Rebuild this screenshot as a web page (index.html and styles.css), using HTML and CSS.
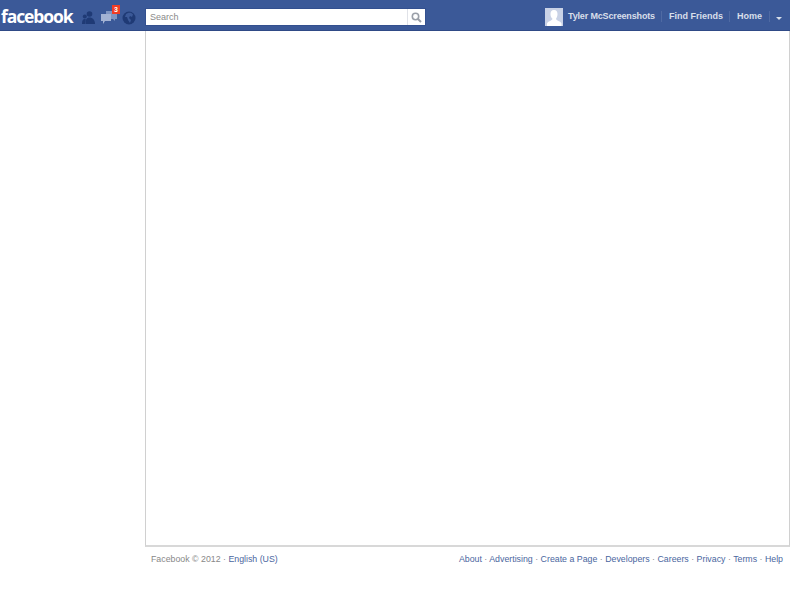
FILE: index.html
```html
<!DOCTYPE html>
<html lang="en">
<head>
    <meta charset="UTF-8">
    <title>Facebook</title>
    <link rel="stylesheet" href="styles.css">
</head>
<body>
    <div class="page">
        <!-- Top bar -->
        <header class="topbar">
            <div class="left-col">
                <a href="#" class="logo">facebook</a>
                <div class="jewels">
                    <svg class="jewel jewel-friends" width="13" height="13" viewBox="0 0 13 13">
                        <circle cx="7.500" cy="3" r="2.800" fill="#1f3a75"/>
                        <path d="M3.500 13c0-4 .8-6.500 4-6.500S13 9 13 13z" fill="#1f3a75"/>
                        <circle cx="2.800" cy="5.500" r="2" fill="#1f3a75"/>
                        <path d="M0 13c0-3.500.8-5 2.800-5 .8 0 1 .4 1 .8L3 13z" fill="#1f3a75"/>
                    </svg>
                    <div class="jewel-msg">
                        <svg class="jewel" width="16" height="15" viewBox="0 0 16 15">
                            <path d="M5 1h11v8h-2v2l-2-2H5z" fill="#7f95c2"/>
                            <path d="M0 4h10v7H4l-2 3v-3H0z" fill="#a3b3d4"/>
                        </svg>
                        <span class="badge">3</span>
                    </div>
                    <svg class="jewel" width="14" height="14" viewBox="0 0 14 14">
                        <circle cx="7" cy="7" r="6.500" fill="#1f3a75"/>
                        <path d="M6 2c2-.5 4 0 5 1.500L10 6 8 5 7 7l2 2-1 3-2-3-1-3H3l1-3z" fill="#3b5998"/>
                    </svg>
                </div>
            </div>
            <form class="search">
                <input type="text" class="search-input" placeholder="Search">
                <button type="button" class="search-btn">
                    <svg width="11" height="11" viewBox="0 0 11 11">
                        <circle cx="4.500" cy="4.500" r="3.200" fill="none" stroke="#9a9fa8" stroke-width="1.600"/>
                        <path d="M7 7l3 3" stroke="#9a9fa8" stroke-width="2"/>
                    </svg>
                </button>
            </form>
            <nav class="user-nav">
                <span class="avatar">
                    <svg width="18" height="18" viewBox="0 0 18 18">
                        <rect width="18" height="18" fill="#c9d2e6"/>
                        <path d="M9 2c2.500 0 3.700 2 3.500 4.500-.2 2-.8 3.500-1.500 4.300 0 1 1.500 1.700 3 2.500 1.500.7 2.500 1.500 2.500 2.700v2H2v-2c0-1.200 1-2 2.500-2.700 1.500-.8 3-1.500 3-2.500C6.300 10 5.700 8.500 5.500 6.500 5.300 4 6.500 2 9 2z" fill="#fff"/>
                    </svg>
                </span>
                <a href="#" class="nav-link nav-name">Tyler McScreenshots</a>
                <a href="#" class="nav-link">Find Friends</a>
                <a href="#" class="nav-link">Home</a>
                <span class="nav-arrow"></span>
            </nav>
        </header>

        <!-- Content -->
        <main class="content-row">
            <div class="content-box"></div>
        </main>

        <!-- Footer -->
        <footer class="footer">
            <div class="footer-left">
                <span>Facebook © 2012 · </span><a href="#">English (US)</a>
            </div>
            <div class="footer-right">
                <a href="#">About</a> · <a href="#">Advertising</a> · <a href="#">Create a Page</a> · <a href="#">Developers</a> · <a href="#">Careers</a> · <a href="#">Privacy</a> · <a href="#">Terms</a> · <a href="#">Help</a>
            </div>
        </footer>
    </div>
</body>
</html>
```
FILE: styles.css
```css
* {
  margin: 0;
  padding: 0;
  box-sizing: border-box;
}

html,
body {
  height: 100%;
  background: #fff;
}

body {
  font-family: "Liberation Sans", Arial, sans-serif;
  font-size: 9px;
  overflow: hidden;
}

a {
  text-decoration: none;
}

.page {
  width: 790px;
}

/* Top bar */
.topbar {
  height: 31px;
  background: #3b5998;
  border-bottom: 1px solid #2f4a86;
  display: flex;
  align-items: flex-start;
}

.left-col {
  width: 145px;
  display: flex;
  flex-shrink: 0;
}

.logo {
  font-family: "Open Sans", "Liberation Sans", sans-serif;
  font-weight: 700;
  font-size: 17.500px;
  letter-spacing: -1.1px;
  line-height: 33px;
  color: #fff;
  padding-left: 1px;
  width: 82px;
}

.jewels {
  display: flex;
  align-items: center;
  height: 31px;
  gap: 5px;
  padding-top: 4px;
}

.jewel {
  display: block;
}

.jewel-friends {
  margin-right: 1px;
}

.jewel-msg {
  position: relative;
}

.badge {
  position: absolute;
  top: -5px;
  right: -3px;
  width: 8px;
  height: 9px;
  background: #f03d25;
  color: #fff;
  font-size: 7px;
  font-weight: 700;
  line-height: 9px;
  text-align: center;
}

/* Search */
.search {
  width: 281px;
  height: 18px;
  margin-top: 8px;
  background: #fff;
  border: 1px solid #33508f;
  display: flex;
}

.search-input {
  flex: 1;
  min-width: 0;
  border: none;
  outline: none;
  padding-left: 4px;
  font-family: inherit;
  font-size: 9px;
  background: transparent;
}

.search-input::placeholder {
  color: #8a8a8a;
}

.search-btn {
  width: 18px;
  border: none;
  border-left: 1px solid #e0e2e8;
  background: #fff;
  display: flex;
  align-items: center;
  justify-content: center;
}

/* Right navigation */
.user-nav {
  margin-left: auto;
  height: 30px;
  display: flex;
  align-items: center;
  padding-top: 3px;
}

.avatar {
  width: 18px;
  height: 18px;
  margin-right: 5px;
}

.avatar svg {
  display: block;
}

.nav-link {
  color: #d8dfea;
  font-weight: 700;
  font-size: 9px;
  line-height: 11px;
  padding: 0 6.500px;
  border-right: 1px solid #4f6aa3;
}

.nav-name {
  padding-left: 0;
  letter-spacing: -0.15px;
}

.nav-arrow {
  width: 0;
  height: 0;
  margin: 3px 8px 0 6.500px;
  border-left: 3.500px solid transparent;
  border-right: 3.500px solid transparent;
  border-top: 3px solid #d8dfea;
}

/* Content */
.content-row {
  padding-left: 145px;
}

.content-box {
  height: 516px;
  background: #fff;
  border: 1px solid #d0d0d0;
  border-top: none;
  border-bottom-width: 2px;
  border-bottom-color: #d8d8d8;
}

/* Footer */
.footer {
  display: flex;
  justify-content: space-between;
  padding: 6px 7px 0 151px;
  font-size: 8.800px;
  line-height: 12px;
  color: #888;
}

.footer a {
  color: #4a66a0;
}
```
